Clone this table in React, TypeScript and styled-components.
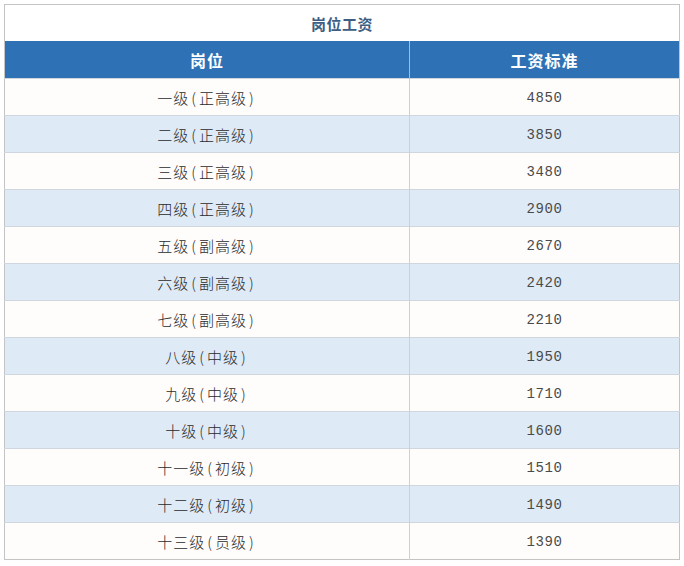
import React from 'react'
import styled, { createGlobalStyle } from 'styled-components'

const rows: [string, string, string][] = [
    ['一级', '正高级', '4850'],
    ['二级', '正高级', '3850'],
    ['三级', '正高级', '3480'],
    ['四级', '正高级', '2900'],
    ['五级', '副高级', '2670'],
    ['六级', '副高级', '2420'],
    ['七级', '副高级', '2210'],
    ['八级', '中级', '1950'],
    ['九级', '中级', '1710'],
    ['十级', '中级', '1600'],
    ['十一级', '初级', '1510'],
    ['十二级', '初级', '1490'],
    ['十三级', '员级', '1390'],
]

export default function App() {
    return (
        <>
            <GlobalStyle />
            <Page>
                <Table>
                    <colgroup>
                        <col style={{ width: 405 }} />
                        <col />
                    </colgroup>
                    <tbody>
                        <tr>
                            <TitleCell colSpan={2}>岗位工资</TitleCell>
                        </tr>
                        <tr>
                            <HeadCell>岗位</HeadCell>
                            <HeadCell>工资标准</HeadCell>
                        </tr>
                        {rows.map(([level, rank, pay], i) => (
                            <Row key={level} $alt={i % 2 === 1}>
                                <LevelCell>
                                    {level}
                                    <Paren>(</Paren>
                                    {rank}
                                    <Paren>)</Paren>
                                </LevelCell>
                                <PayCell>{pay}</PayCell>
                            </Row>
                        ))}
                    </tbody>
                </Table>
            </Page>
        </>
    )
}

const GlobalStyle = createGlobalStyle`
    body {
        margin: 0;
        background: #ffffff;
        font-family: "Noto Sans CJK SC", "Noto Sans", sans-serif;
    }
`

const Page = styled.div`
    padding: 4px 4px 0 4px;
`

const Table = styled.table`
    width: 676px;
    border-collapse: collapse;
    table-layout: fixed;
    border: 1px solid #c4c4c4;
`

const TitleCell = styled.td`
    height: 36px;
    padding: 0;
    text-align: center;
    font-size: 15px;
    font-weight: 700;
    color: #3d5d82;
    background: #ffffff;
    letter-spacing: 0.5px;
`

const HeadCell = styled.td`
    height: 37px;
    padding: 0;
    text-align: center;
    font-size: 16px;
    font-weight: 700;
    color: #ffffff;
    background: #2e72b5;
    letter-spacing: 1px;

    & + & {
        border-left: 1px solid #8fc3e8;
    }
`

const Row = styled.tr<{ $alt: boolean }>`
    background: ${({ $alt }) => ($alt ? '#deeaf6' : '#fffdfc')};
    border-top: 1px solid #cfd6de;
`

const LevelCell = styled.td`
    height: 36px;
    padding: 0;
    text-align: center;
    font-size: 15px;
    font-weight: 300;
    color: #2a2a2a;
    letter-spacing: 1px;
    border-right: 1px solid #cdd0d4;
`

const Paren = styled.span`
    margin: 0 2px;
`

const PayCell = styled.td`
    padding: 2px 0 0;
    text-align: center;
    font-family: "Liberation Mono", monospace;
    font-size: 14px;
    color: #4a4a4a;
    letter-spacing: 0.6px;
`
